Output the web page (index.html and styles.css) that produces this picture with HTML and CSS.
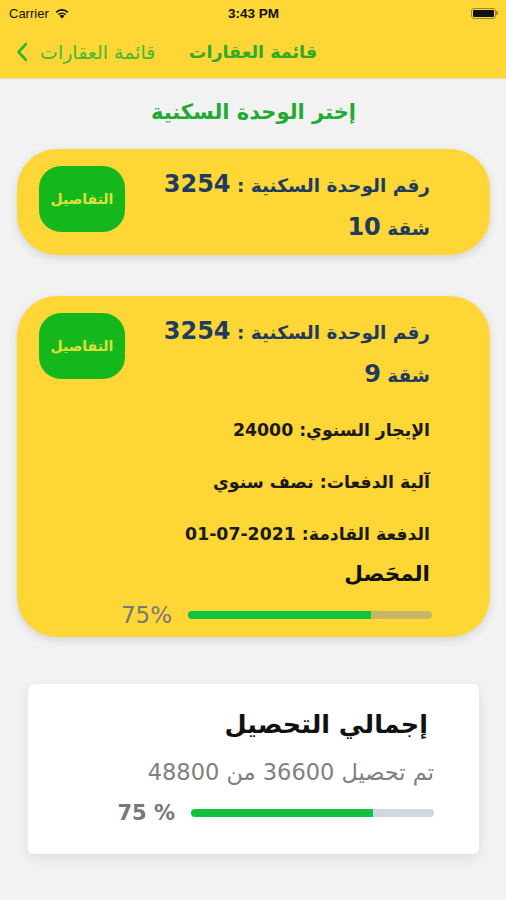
FILE: index.html
```html
<!DOCTYPE html>
<html lang="ar" dir="rtl">
<head>
    <meta charset="UTF-8">
    <meta name="viewport" content="width=device-width, initial-scale=1.0">
    <title>قائمة العقارات</title>
    <link rel="stylesheet" href="styles.css">
</head>
<body>

    <!-- Status Bar -->
    <div class="status-bar" dir="ltr">
        <div class="status-left">
            <span>Carrier</span>
            <svg class="wifi" width="16" height="12" viewBox="0 0 16 12">
                <path d="M8 11.5 L5.6 8.9 A3.4 3.4 0 0 1 10.4 8.9 Z" fill="#111"/>
                <path d="M3.9 7.1 A5.9 5.9 0 0 1 12.1 7.1 L11 8.3 A4.3 4.3 0 0 0 5 8.3 Z" fill="#111"/>
                <path d="M1.6 4.7 A9.2 9.2 0 0 1 14.4 4.7 L13.3 5.9 A7.6 7.6 0 0 0 2.7 5.9 Z" fill="#111"/>
            </svg>
        </div>
        <div class="status-time">3:43 PM</div>
        <div class="status-right">
            <div class="battery"><div class="battery-level"></div></div>
            <div class="battery-cap"></div>
        </div>
    </div>

    <!-- Navigation Bar -->
    <header class="nav-bar" dir="ltr">
        <a class="back" href="#">
            <svg width="12" height="20" viewBox="0 0 12 20">
                <path d="M10 2 L2.5 10 L10 18" fill="none" stroke="#2fb82f" stroke-width="2.6" stroke-linecap="round" stroke-linejoin="round"/>
            </svg>
            <span>قائمة العقارات</span>
        </a>
        <h1 class="nav-title">قائمة العقارات</h1>
    </header>

    <main class="content">
        <h2 class="section-title">إختر الوحدة السكنية</h2>

        <!-- Unit 10 -->
        <div class="unit-card">
            <div class="unit-top">
                <div class="unit-info">
                    <p>رقم الوحدة السكنية : <span class="num">3254</span></p>
                    <p>شقة <span class="num">10</span></p>
                </div>
                <button class="details-btn">التفاصيل</button>
            </div>
        </div>

        <!-- Unit 9 -->
        <div class="unit-card">
            <div class="unit-top">
                <div class="unit-info">
                    <p>رقم الوحدة السكنية : <span class="num">3254</span></p>
                    <p>شقة <span class="num">9</span></p>
                </div>
                <button class="details-btn">التفاصيل</button>
            </div>
            <div class="unit-details">
                <p class="detail-row">الإيجار السنوي: 24000</p>
                <p class="detail-row">آلية الدفعات: نصف سنوي</p>
                <p class="detail-row">الدفعة القادمة: 2021-07-01</p>
                <p class="collected">المحَصل</p>
                <div class="progress-row">
                    <div class="progress-track dark"><div class="progress-fill" style="width: 75%"></div></div>
                    <span class="progress-label">75%</span>
                </div>
            </div>
        </div>

        <!-- Total Collection -->
        <div class="total-card">
            <h3>إجمالي التحصيل</h3>
            <p class="total-sub">تم تحصيل 36600 من 48800</p>
            <div class="progress-row">
                <div class="progress-track"><div class="progress-fill" style="width: 75%"></div></div>
                <span class="progress-label">75 %</span>
            </div>
        </div>
    </main>

</body>
</html>
```

FILE: styles.css
```css
/* Reset */
* {
    margin: 0;
    padding: 0;
    box-sizing: border-box;
}

body {
    width: 506px;
    height: 900px;
    font-family: 'DejaVu Sans', sans-serif;
    background-color: #f2f2f2;
    color: #111;
    overflow: hidden;
}

/* Status Bar */
.status-bar {
    height: 26px;
    background-color: #fed636;
    display: flex;
    align-items: center;
    justify-content: space-between;
    padding: 0 8px 0 9px;
    font-family: 'Liberation Sans', sans-serif;
    font-size: 13px;
    color: #111;
}

.status-left {
    display: flex;
    align-items: center;
    gap: 5px;
    width: 120px;
}

.status-time {
    font-weight: 600;
    font-size: 13.5px;
}

.status-right {
    display: flex;
    align-items: center;
    justify-content: flex-end;
    width: 120px;
}

.battery {
    width: 25px;
    height: 11px;
    border: 1px solid #9b8a2a;
    border-radius: 3px;
    padding: 1px;
}

.battery-level {
    width: 100%;
    height: 100%;
    background-color: #111;
    border-radius: 1px;
}

.battery-cap {
    width: 2px;
    height: 4px;
    background-color: #9b8a2a;
    border-radius: 0 1px 1px 0;
}

/* Navigation Bar */
.nav-bar {
    height: 53px;
    background-color: #fed636;
    border-bottom: 1px solid #e4dcb0;
    display: flex;
    align-items: center;
    padding: 0 16px;
    position: relative;
}

.back {
    display: flex;
    align-items: center;
    gap: 12px;
    text-decoration: none;
    color: #45b935;
    font-size: 19px;
}

.nav-title {
    position: absolute;
    left: 0;
    right: 0;
    text-align: center;
    font-size: 17.5px;
    font-weight: 700;
    color: #2faa2a;
    pointer-events: none;
}

/* Main Content */
.content {
    padding: 20px 16px 0 17px;
}

.section-title {
    text-align: center;
    font-size: 21px;
    line-height: 26px;
    font-weight: 700;
    color: #22aa33;
    margin-bottom: 24px;
}

.unit-card {
    background-color: #fed636;
    border-radius: 40px;
    box-shadow: 0 3px 10px rgba(0, 0, 0, 0.12);
    padding: 15px 60px 5px 22px;
    margin-bottom: 41px;
}

.unit-top {
    display: flex;
    justify-content: space-between;
    align-items: flex-start;
}

.unit-info p {
    font-size: 18.5px;
    line-height: 43px;
    font-weight: 700;
    color: #1f3c60;
}

.unit-info .num {
    font-size: 24px;
    line-height: 1;
}

.details-btn {
    width: 86px;
    height: 66px;
    margin-top: 2px;
    border: none;
    border-radius: 22px;
    background-color: #14b81c;
    color: #dfe13a;
    font-family: inherit;
    font-size: 14px;
    font-weight: 700;
    cursor: pointer;
}

.unit-card:last-of-type {
    margin-bottom: 0;
}

.unit-details {
    margin-top: 7px;
    padding-bottom: 5px;
}

.detail-row {
    font-size: 17.3px;
    line-height: 52px;
    font-weight: 700;
    color: #1a1a1a;
}

.collected {
    font-size: 21.5px;
    line-height: 28px;
    font-weight: 700;
    color: #111;
}

/* Progress */
.progress-row {
    display: flex;
    align-items: center;
    gap: 16px;
    height: 24px;
    margin-top: 15px;
    margin-right: -2px;
}

.progress-track {
    width: 244px;
    height: 8px;
    border-radius: 4px;
    background-color: #d2d6de;
    overflow: hidden;
    direction: ltr;
}

.progress-track.dark {
    background-color: #c9b56a;
}

.progress-fill {
    height: 100%;
    background-color: #12c23e;
}

.progress-label {
    font-size: 23px;
    line-height: 24px;
    color: #787878;
    direction: ltr;
}

/* Total Card */
.total-card {
    background-color: #fff;
    border-radius: 6px;
    box-shadow: 0 4px 14px rgba(0, 0, 0, 0.09);
    margin: 47px 11px 0 11px;
    padding: 23px 45px 29px 0;
}

.total-card h3 {
    font-size: 25.5px;
    line-height: 34px;
    font-weight: 700;
    color: #111;
    margin-right: 6px;
}

.total-sub {
    font-size: 22.5px;
    line-height: 34px;
    color: #808080;
    margin-top: 14px;
}

.total-card .progress-row {
    margin-top: 12px;
    margin-right: 0;
}

.total-card .progress-track {
    width: 243px;
}

.total-card .progress-label {
    font-size: 21px;
    font-weight: 700;
}
```
